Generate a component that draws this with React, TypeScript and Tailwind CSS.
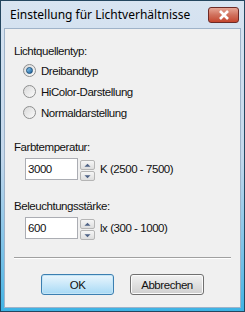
import { useState } from "react";

function Radio({ checked, label }: { checked?: boolean; label: string }) {
  return (
    <div className="flex items-center h-[21px] pl-[9px]">
      <span className="w-[13px] h-[13px] rounded-full border border-[#8e8f8f] bg-gradient-to-br from-[#d9d9d9] to-[#fbfbfb] flex items-center justify-center">
        {checked && <span className="w-[7px] h-[7px] rounded-full bg-gradient-to-br from-[#8fd0f5] to-[#16609c] border border-[#1b4f7a]" />}
      </span>
      <span className="ml-[5px]">{label}</span>
    </div>
  );
}

function Spin({ value, unit }: { value: string; unit: string }) {
  return (
    <div className="flex items-center pl-[11px]">
      <div className="w-[53px] h-[22px] border border-[#abadb3] bg-white pl-[2px] flex items-center">{value}</div>
      <div className="ml-[2px] flex flex-col w-[15px] h-[19px] gap-[1px]">
        {["M4 6 L7.5 2.5 L11 6", "M4 3 L7.5 6.5 L11 3"].map(d => (
          <div key={d} className="flex-1 border border-[#b5b5b5] rounded-[2px] bg-gradient-to-b from-[#f6f6f6] to-[#dedede] flex items-center justify-center">
            <svg width="15" height="8" viewBox="0 0 15 8"><path d={d} fill="#4d6185" /></svg>
          </div>
        ))}
      </div>
      <span className="ml-[5px]">{unit}</span>
    </div>
  );
}

export default function App() {
  const [sel] = useState(0);
  return (
    <div className="w-[245px] h-[312px] bg-[#24465f] p-[1px] font-['Liberation_Sans',sans-serif] text-[11.5px] tracking-[-0.45px] leading-[14px] text-[#111]">
      <div className="h-full flex flex-col bg-gradient-to-b from-[#d8e4f1] via-[#c4d8ec] to-[#3db3e4] px-[3px] pb-[3px]">
        <div className="h-[27px] flex items-center justify-between pl-[6px] pr-[2px]">
          <span className="text-[12px] tracking-normal font-['Noto_Sans',sans-serif] text-black">Einstellung für Lichtverhältnisse</span>
          <div className="w-[31px] h-[16px] rounded-[3px] border border-[#6d2a26] bg-gradient-to-b from-[#e6a595] via-[#d0705c] to-[#c4452d] flex items-center justify-center">
            <svg width="12" height="10" viewBox="0 0 12 10"><path d="M2 1 L10 9 M10 1 L2 9" stroke="#fff" strokeWidth="2.6" /></svg>
          </div>
        </div>
        <div className="flex-1 bg-[#f0f0f0] border border-[#9fb3c9] pl-[9px] pr-[9px] pt-[15px] flex flex-col">
          <div>Lichtquellentyp:</div>
          <div className="mt-[2px]">
            {["Dreibandtyp", "HiColor-Darstellung", "Normaldarstellung"].map((l, i) => <Radio key={l} label={l} checked={i === sel} />)}
          </div>
          <div className="mt-[17px]">Farbtemperatur:</div>
          <div className="mt-[4px]"><Spin value="3000" unit="K (2500 - 7500)" /></div>
          <div className="mt-[19px]">Beleuchtungsstärke:</div>
          <div className="mt-[4px]"><Spin value="600" unit="lx (300 - 1000)" /></div>
          <div className="mt-[18px] border-t border-[#a0a0a0] border-b border-b-white" />
          <div className="mt-[15px] flex justify-center gap-[16px]">
            <button className="w-[73px] h-[21px] rounded-[3px] border border-[#3c7fb1] bg-gradient-to-b from-[#eaf6fd] to-[#a7d9f5] shadow-[inset_0_0_0_1px_#c4e5f6]">OK</button>
            <button className="w-[74px] h-[21px] rounded-[3px] border border-[#707070] bg-gradient-to-b from-[#f2f2f2] to-[#cfcfcf] shadow-[inset_0_0_0_1px_#fbfbfb]">Abbrechen</button>
          </div>
        </div>
      </div>
    </div>
  );
}
